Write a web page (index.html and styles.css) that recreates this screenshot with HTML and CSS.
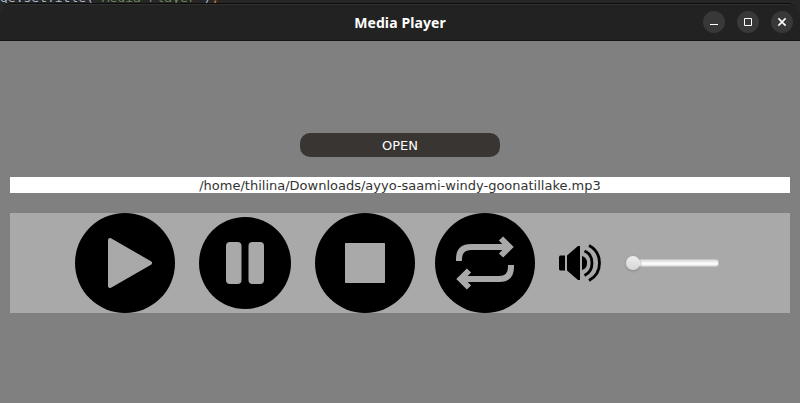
FILE: index.html
```html
<!DOCTYPE html>
<html lang="en">
<head>
<meta charset="utf-8">
<title>Media Player</title>
<link rel="stylesheet" href="styles.css">
</head>
<body>
<div class="editor"><pre class="code">ge.setTitle(<span class="string">"Media Player"</span>)<span class="semi">;</span></pre></div>
<main class="window">
  <header class="titlebar">
    <span></span>
    <h1 class="title">Media Player</h1>
    <div class="window-buttons">
      <button class="wbtn" aria-label="Minimize"><svg width="22" height="22"><path d="M7 13.5h8"/></svg></button>
      <button class="wbtn" aria-label="Maximize"><svg width="22" height="22"><path d="M7.5 7.5h7v7h-7z"/></svg></button>
      <button class="wbtn" aria-label="Close"><svg width="22" height="22"><path class="cross" d="M7.4 7.4l7.2 7.2M14.6 7.4l-7.2 7.2"/></svg></button>
    </div>
  </header>
  <section class="content">
    <button class="open">OPEN</button>
    <div class="path">/home/thilina/Downloads/ayyo-saami-windy-goonatillake.mp3</div>
    <div class="controls">
      <svg class="icon" width="100" height="100" viewBox="0 0 100 100">
        <circle cx="50" cy="50" r="50"/>
        <path class="cut join" d="M35 27L75 50L35 73z"/>
      </svg>
      <svg class="icon" width="100" height="100" viewBox="0 0 100 100">
        <circle cx="50" cy="50" r="46"/>
        <rect class="cut" x="31" y="29" width="15.5" height="42" rx="4"/>
        <rect class="cut" x="53.5" y="29" width="15.5" height="42" rx="4"/>
      </svg>
      <svg class="icon" width="100" height="100" viewBox="0 0 100 100">
        <circle cx="50" cy="50" r="50"/>
        <rect class="cut" x="30" y="30" width="40" height="40" rx=".8"/>
      </svg>
      <svg class="icon" width="100" height="100" viewBox="0 0 100 100">
        <circle cx="50" cy="50" r="50"/>
        <path class="line" d="M24 48V46Q24 34 36 34H74M66 25.5L74.5 34L66 42.5M76 52V54Q76 66 64 66H26M34 57.5L25.5 66L34 74.5"/>
      </svg>
      <svg class="icon" width="50" height="100" viewBox="0 0 50 100">
        <path d="M5 42.5H10V57.5H5L4 56.5V43.5z"/>
        <path d="M12 42.5L23 33H25V67H23L12 57.5z"/>
        <path d="M27 43Q32 44.5 32 50T27 57z"/>
        <path class="wave" d="M29.5 38C39.5 42 39.5 58 29.5 62.5M34 32.5C48 40 48 60 34 67.5"/>
      </svg>
      <div class="slider"><div class="track"></div><div class="thumb"></div></div>
    </div>
  </section>
</main>
</body>
</html>
```
FILE: styles.css
```css
* { box-sizing: border-box; }
body {
  margin: 0;
  height: 403px;
  overflow: hidden;
  background: #262626;
  font: 13px/16px "DejaVu Sans", sans-serif;
}
.editor {
  height: 3px;
  overflow: hidden;
  display: flex;
  align-items: flex-end;
}
.code {
  margin: 0 0 -2px;
  color: #a9b7c6;
  font: 13px/15px "DejaVu Sans Mono", monospace;
}
.string { color: #6a8759; }
.semi { color: #cc7832; }
.window {
  height: 400px;
  background: #808080;
  border-radius: 11px 11px 0 0;
}
.titlebar {
  height: 38px;
  padding: 0 7px 1px;
  display: grid;
  grid-template-columns: 1fr auto 1fr;
  align-items: center;
  background: #222;
  border-top: 1px solid #0b0b0b;
  border-bottom: 1px solid #131313;
  border-radius: 11px 11px 0 0;
  box-shadow: inset 0 1px #303030;
}
.title {
  margin: 2px 0 0;
  color: #fff;
  font: bold 14px/20px "Noto Sans", sans-serif;
  letter-spacing: .1px;
}
.window-buttons {
  display: flex;
  gap: 12px;
  justify-content: flex-end;
}
.wbtn {
  width: 22px;
  height: 22px;
  padding: 0;
  border: 0;
  border-radius: 50%;
  background: #383838;
}
.wbtn svg {
  display: block;
  fill: none;
  stroke: #fff;
}
.cross { stroke-width: 1.6; }
.content {
  padding: 92px 10px 0;
  display: flex;
  flex-direction: column;
  align-items: center;
  gap: 20px;
}
.open {
  width: 200px;
  height: 24px;
  padding: 2px 0 0;
  border: 0;
  border-radius: 10px;
  background: #383533;
  color: #fff;
  font: 13px/22px "DejaVu Sans", sans-serif;
}
.path {
  width: 100%;
  height: 16px;
  background: #fff;
  color: #333;
  line-height: 18px;
  text-align: center;
}
.controls {
  width: 100%;
  height: 100px;
  display: flex;
  justify-content: center;
  align-items: center;
  gap: 20px;
  background: #a9a9a9;
}
.icon { flex: none; }
.cut { fill: #a9a9a9; }
.join { stroke: #a9a9a9; stroke-width: 4; stroke-linejoin: round; }
.line { fill: none; stroke: #a9a9a9; stroke-width: 6; }
.wave { fill: none; stroke: #000; stroke-width: 2.8; }
.slider {
  width: 100px;
  height: 16px;
  display: flex;
  align-items: center;
}
.track {
  flex: 1;
  height: 8px;
  margin: 0 6px 0 8px;
  border: 1px solid #c4c4c4;
  border-radius: 3px;
  background: linear-gradient(#dcdcdc, #f6f6f6 45%, #fff 70%, #d8d8d8);
}
.thumb {
  order: -1;
  position: relative;
  width: 14px;
  height: 14px;
  margin: 0 -15px 0 1px;
  border-radius: 50%;
  background: linear-gradient(#eee, #d6d6d6);
  box-shadow: 0 1px 3px #858585;
}
```
